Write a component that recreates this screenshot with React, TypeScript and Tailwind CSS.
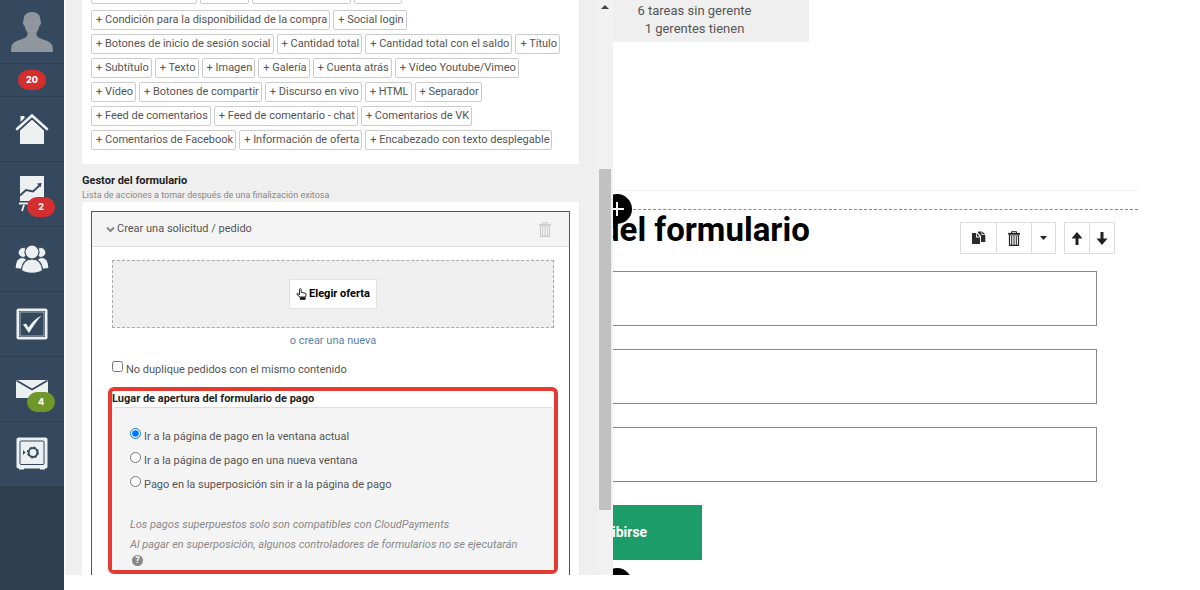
import React, { useState } from "react";

const fieldRows: string[][] = [
  ["+ Condición para la disponibilidad de la compra", "+ Social login"],
  [
    "+ Botones de inicio de sesión social",
    "+ Cantidad total",
    "+ Cantidad total con el saldo",
    "+ Título",
  ],
  [
    "+ Subtítulo",
    "+ Texto",
    "+ Imagen",
    "+ Galería",
    "+ Cuenta atrás",
    "+ Vídeo Youtube/Vimeo",
  ],
  [
    "+ Vídeo",
    "+ Botones de compartir",
    "+ Discurso en vivo",
    "+ HTML",
    "+ Separador",
  ],
  [
    "+ Feed de comentarios",
    "+ Feed de comentario - chat",
    "+ Comentarios de VK",
  ],
  [
    "+ Comentarios de Facebook",
    "+ Información de oferta",
    "+ Encabezado con texto desplegable",
  ],
];

const paymentOptions = [
  { value: "current", label: "Ir a la página de pago en la ventana actual" },
  { value: "new", label: "Ir a la página de pago en una nueva ventana" },
  {
    value: "overlay",
    label: "Pago en la superposición sin ir a la página de pago",
  },
];

function UserIcon() {
  return (
    <svg width="42" height="42" viewBox="0 0 42 42" fill="#8f969e">
      <path d="M21 1c-5.500 0-8.600 3.500-8.400 8.500-.9.600-.7 2.200-.3 3.500.3 1.200.8 2 1.500 2.200.4 2.800 1.600 4.800 2.700 6.200.4 2.700-.5 4.400-2.800 5.500C9 29 1 30 .3 36L0 41h42l-.3-5c-.7-6-8.700-7-13.400-9.100-2.300-1.100-3.200-2.800-2.800-5.500 1.100-1.400 2.300-3.400 2.700-6.200.7-.2 1.200-1 1.500-2.200.4-1.300.6-2.900-.3-3.500C29.600 4.500 26.500 1 21 1z" />
    </svg>
  );
}

function HomeIcon() {
  return (
    <svg width="34" height="32" viewBox="0 0 34 32">
      <path d="M5.500 3h4v5l-4 4z" fill="#ecf0f1" />
      <path d="M17 6 29 17.500V31H5V17.500z" fill="#ecf0f1" />
      <path
        d="M2 16 17 2.500 32 16"
        fill="none"
        stroke="#34495e"
        strokeWidth="6"
      />
      <path
        d="M2 16 17 2.500 32 16"
        fill="none"
        stroke="#ecf0f1"
        strokeWidth="2.600"
        strokeLinecap="round"
      />
    </svg>
  );
}

function ChartIcon() {
  return (
    <svg width="26" height="38" viewBox="0 0 26 38">
      <path d="M1 1h24v25H1z" fill="#ecf0f1" />
      <path d="M0 27.500h26v2H0z" fill="#ecf0f1" />
      <path
        d="M5 30 3 36M21 30l2 6"
        stroke="#ecf0f1"
        strokeWidth="1.800"
        fill="none"
      />
      <path
        d="M1 20.500 7 15l7 1.500 7-6.500"
        stroke="#34495e"
        strokeWidth="1.800"
        fill="none"
      />
      <path d="M18 8.500 22.500 8l-.8 4.500z" fill="#34495e" />
    </svg>
  );
}

function UsersIcon() {
  return (
    <svg
      width="34"
      height="30"
      viewBox="0 0 34 30"
      fill="#ecf0f1"
      stroke="#34495e"
      strokeWidth="1.200"
    >
      <circle cx="8" cy="8.500" r="5" />
      <circle cx="26" cy="8.500" r="5" />
      <path d="M0 24.500C.3 17 2.500 13.500 7 13.500s6 3 6 9l-4 3z" />
      <path d="M34 24.500c-.3-7.500-2.500-11-7-11s-6 3-6 9l4 3z" />
      <path d="M6.500 26.500C7 19 10 15 17 15s10 4 10.500 11.500c-5 3.800-16 3.800-21 0z" />
      <circle cx="17" cy="8" r="7" />
    </svg>
  );
}

function CheckIcon() {
  return (
    <svg width="32" height="32" viewBox="0 0 32 32">
      <rect x=".5" y=".5" width="31" height="31" rx="2" fill="#ecf0f1" />
      <rect x="3" y="3" width="26" height="26" fill="#34495e" />
      <rect
        x="4"
        y="4"
        width="24"
        height="24"
        fill="none"
        stroke="#ecf0f1"
        strokeWidth=".6"
      />
      <path
        d="M7 16.500 10 15.500 12.500 19.500C16 14 20 10 25.500 7.500 20.500 13 17 18.500 13 25z"
        fill="#ecf0f1"
      />
    </svg>
  );
}

function MailIcon() {
  return (
    <svg width="32" height="20" viewBox="0 0 32 20">
      <path d="M0 1h32v18H0z" fill="#ecf0f1" />
      <path
        d="M.5 1.500 16 10.500 31.500 1.500"
        fill="none"
        stroke="#34495e"
        strokeWidth="1.800"
      />
    </svg>
  );
}

function SafeIcon() {
  return (
    <svg width="32" height="34" viewBox="0 0 32 34">
      <rect x=".5" y=".5" width="31" height="31" rx="2" fill="#ecf0f1" />
      <path d="M3 31h5v1.500H3zM24 31h5v1.500h-5z" fill="#ecf0f1" />
      <rect
        x="4"
        y="4"
        width="24"
        height="23.500"
        rx="1"
        fill="none"
        stroke="#34495e"
      />
      <circle
        cx="17"
        cy="15.500"
        r="4.400"
        fill="none"
        stroke="#34495e"
        strokeWidth="2"
      />
      <circle
        cx="17"
        cy="15.500"
        r="5.600"
        fill="none"
        stroke="#34495e"
        strokeDasharray="2.200 2.200"
      />
      <path d="M7 13 9.500 15.500 7 18z" fill="#34495e" />
    </svg>
  );
}

function TrashIcon({ className }: { className?: string }) {
  return (
    <svg
      width="12"
      height="15"
      viewBox="0 0 12 15"
      fill="none"
      stroke="currentColor"
      className={className}
    >
      <path d="M3.500 2V.7h5V2" />
      <path d="M0 2.700h12" strokeWidth="1.600" />
      <path d="M1.500 4v10.300h9V4z" strokeWidth="1.200" />
      <path d="M3.700 5v9M6 5v9M8.300 5v9" />
    </svg>
  );
}

function CopyIcon() {
  return (
    <svg width="14" height="14" viewBox="0 0 14 14" fill="#2b2b2b">
      <path d="M0 2h4v4.500h4V13H0z" />
      <path d="M4.800 2 7.800 5.500h-3z" />
      <path d="M6 .5h3.500V4h3.800v7H9V5L6 1.800z" />
      <path d="M10.300.5 13.300 3.300h-3z" />
    </svg>
  );
}

function ArrowIcon({ down }: { down?: boolean }) {
  return (
    <svg
      width="12"
      height="13"
      viewBox="0 0 12 13"
      fill="#222"
      className={down ? "rotate-180" : undefined}
    >
      <path d="M6 0 11.500 6.500H7.500V13h-3V6.500H.5z" />
    </svg>
  );
}

function HandIcon() {
  return (
    <svg
      width="11"
      height="12"
      viewBox="0 0 11 12"
      fill="none"
      stroke="#111"
      strokeWidth=".9"
      strokeLinejoin="round"
    >
      <path d="M3.500 7V1.400c0-1.100 1.700-1.100 1.700 0v2.900l4 .9c.8.200 1.100.7 1 1.400L9.500 9H4L1 6.600c-.7-.9.5-1.700 1.200-1.100z" />
      <path d="M4.200 9.700h5v1.600h-5z" fill="#111" />
    </svg>
  );
}

const navItems = [
  { label: "Inicio", icon: <HomeIcon /> },
  { label: "Tráfico", icon: <ChartIcon />, badge: "2", color: "bg-[#d32f2f]" },
  { label: "Usuarios", icon: <UsersIcon /> },
  { label: "Tareas", icon: <CheckIcon /> },
  { label: "Mensajes", icon: <MailIcon />, badge: "4", color: "bg-[#71972b]" },
  { label: "Ventas", icon: <SafeIcon /> },
];

function Sidebar() {
  return (
    <nav className="w-16 shrink-0 bg-[#2c3e50] font-[Inter,sans-serif] font-extrabold text-white">
      <a
        href="#perfil"
        aria-label="Perfil"
        className="flex h-16 items-center justify-center border-b border-[#2c3e50] bg-[#34495e]"
      >
        <UserIcon />
      </a>
      <a
        href="#avisos"
        className="flex h-[33px] items-center justify-center border-b border-[#2c3e50] bg-[#34495e]"
      >
        <span className="flex h-5 w-7 items-center justify-center rounded-full bg-[#d32f2f] text-[9px]">
          20
        </span>
      </a>
      {navItems.map((item) => (
        <a
          key={item.label}
          href="#menu"
          aria-label={item.label}
          className="relative flex h-[65px] items-center justify-center border-b border-[#2c3e50] bg-[#34495e]"
        >
          {item.icon}
          {item.badge && (
            <span
              className={`absolute right-[9px] bottom-[9px] flex h-5 w-7 items-center justify-center rounded-full text-[9px] ${item.color}`}
            >
              {item.badge}
            </span>
          )}
        </a>
      ))}
    </nav>
  );
}

function FieldButtons() {
  return (
    <div className="-mt-3 flex flex-col gap-1 bg-white pb-3.5 pl-[9px]">
      <div className="mb-0.5 flex gap-[3px]" aria-hidden="true">
        <span className="h-4 w-[106px] rounded-xs border border-[#ccc]" />
        <span className="h-4 w-[49px] rounded-xs border border-[#ccc]" />
        <span className="h-4 w-[99px] rounded-xs border border-[#ccc]" />
        <span className="h-4 w-12 rounded-xs border border-[#ccc]" />
      </div>
      {fieldRows.map((row) => (
        <div key={row[0]} className="flex gap-[3px]">
          {row.map((label) => (
            <button
              key={label}
              type="button"
              className="h-5 rounded-xs border border-[#ccc] bg-white pr-0.5 pl-1 text-[11px] leading-4 whitespace-nowrap text-[#555]"
            >
              {label}
            </button>
          ))}
        </div>
      ))}
    </div>
  );
}

function PaymentPlace() {
  const [place, setPlace] = useState("current");

  return (
    <section className="-mx-1 mt-2.5 rounded-md border-4 border-[#e53a30]">
      <h3 className="text-[11px] leading-4 font-bold text-[#222]">
        Lugar de apertura del formulario de pago
      </h3>
      <div className="rounded-t-sm border-t border-[#ddd] bg-[#f4f4f4] px-[18px] pt-[17px] pb-1">
        {paymentOptions.map((option) => (
          <label
            key={option.value}
            className="flex h-6 items-start gap-[3px] text-[11px] leading-6 text-[#555]"
          >
            <input
              type="radio"
              name="place"
              value={option.value}
              checked={place === option.value}
              onChange={() => setPlace(option.value)}
              className="mt-[3px] size-[11px] shrink-0"
            />
            {option.label}
          </label>
        ))}
        <p className="mt-[18px] text-[11px] leading-5 text-[#888] italic">
          Los pagos superpuestos solo son compatibles con CloudPayments
        </p>
        <p className="text-[11px] leading-5 text-[#888] italic">
          Al pagar en superposición, algunos controladores de formularios no se
          ejecutarán
        </p>
        <button
          type="button"
          aria-label="Ayuda"
          className="ml-0.5 flex size-[11px] items-center justify-center rounded-full bg-[#888] text-[9px] leading-none font-bold text-white"
        >
          ?
        </button>
      </div>
    </section>
  );
}

function FormHandler() {
  const [unique, setUnique] = useState(false);

  return (
    <section className="bg-white px-[9px] pt-[9px]">
      <div className="border border-b-0 border-[#555]">
        <header className="flex h-[35px] items-center justify-between border-b border-[#ddd] bg-[#f4f4f4] pr-[18px] pl-3.5">
          <h2 className="flex items-center gap-0.5 text-[11px] text-[#555]">
            <svg width="9" height="7" viewBox="0 0 9 7" fill="none">
              <path d="m1 1.500 3.500 3.500L8 1.500" stroke="#888" strokeWidth="2" />
            </svg>
            Crear una solicitud / pedido
          </h2>
          <button type="button" aria-label="Eliminar">
            <TrashIcon className="text-[#ccc]" />
          </button>
        </header>
        <div className="pt-[13px] pr-[15px] pb-2 pl-5">
          <div className="flex h-[68px] items-center justify-center border border-dashed border-[#aaa] bg-[#efefef]">
            <button
              type="button"
              className="flex h-[30px] items-center gap-0.5 border border-[#e2e2e2] bg-white px-1.5 text-[11px] font-bold text-black"
            >
              <HandIcon />
              Elegir oferta
            </button>
          </div>
          <div className="mt-[5px] text-center text-[11px] leading-4">
            <a href="#nueva" className="text-[#5b82b0]">
              o crear una nueva
            </a>
          </div>
          <label className="mt-3 flex h-4 items-start gap-[3px] text-[11px] leading-[18px] text-[#555]">
            <input
              type="checkbox"
              checked={unique}
              onChange={(e) => setUnique(e.target.checked)}
              className="size-[11px] shrink-0"
            />
            No duplique pedidos con el mismo contenido
          </label>
          <PaymentPlace />
        </div>
      </div>
    </section>
  );
}

function EditorPanel() {
  return (
    <div className="flex min-w-0 overflow-hidden border-l-2 border-[#fafafa] bg-[#efefef]">
      <div className="min-w-0 flex-1 pr-[19px] pl-4">
        <FieldButtons />
        <h2 className="mt-2.5 text-[11px] leading-[14px] font-bold text-[#222]">
          Gestor del formulario
        </h2>
        <p className="text-[9px] leading-[14px] text-[#888]">
          Lista de acciones a tomar después de una finalización exitosa
        </p>
        <FormHandler />
      </div>
      <div className="flex w-[15px] shrink-0 flex-col bg-[#f1f1f1] px-px">
        <svg
          width="8"
          height="4"
          viewBox="0 0 8 4"
          className="mt-[5px] ml-0.5"
        >
          <path d="M4 0 8 4H0z" fill="#444" />
        </svg>
        <div className="mt-40 h-[341px] w-3 bg-[#c1c1c1]" />
      </div>
    </div>
  );
}

function AddBlockButton({ className }: { className: string }) {
  return (
    <button
      type="button"
      aria-label="Añadir bloque"
      className={`absolute -left-[11px] flex size-[30px] items-center justify-center rounded-full bg-black ${className}`}
    >
      <svg width="14" height="14" viewBox="0 0 14 14">
        <path d="M7 0v14M0 7h14" stroke="#fff" strokeWidth="2" />
      </svg>
    </button>
  );
}

function BlockToolbar() {
  return (
    <div className="mt-3 flex gap-2">
      <div className="flex h-8 divide-x divide-[#ddd] border border-[#ddd]">
        <button
          type="button"
          aria-label="Copiar"
          className="flex w-9 items-center justify-center"
        >
          <CopyIcon />
        </button>
        <button
          type="button"
          aria-label="Eliminar"
          className="flex w-[35px] items-center justify-center"
        >
          <TrashIcon className="text-[#222]" />
        </button>
        <button
          type="button"
          aria-label="Más"
          className="flex w-[23px] items-center justify-center"
        >
          <svg width="7" height="4" viewBox="0 0 7 4">
            <path d="M0 0h7L3.500 4z" fill="#222" />
          </svg>
        </button>
      </div>
      <div className="flex h-8 divide-x divide-[#ddd] border border-[#ddd]">
        <button
          type="button"
          aria-label="Subir"
          className="flex w-[25px] items-center justify-center"
        >
          <ArrowIcon />
        </button>
        <button
          type="button"
          aria-label="Bajar"
          className="flex w-6 items-center justify-center"
        >
          <ArrowIcon down />
        </button>
      </div>
    </div>
  );
}

function Preview() {
  return (
    <main className="min-w-0 overflow-hidden bg-white">
      <div className="-ml-[33px] h-[42px] w-[229px] bg-[#efefef] pt-0.5 text-center text-[13px] leading-[18px] text-[#555]">
        <p>6 tareas sin gerente</p>
        <p>1 gerentes tienen</p>
      </div>
      <div className="mt-[148px] mr-[62px] border-t border-[#eee] pt-[18px]">
        <div className="relative border-t border-dashed border-[#888]">
          <AddBlockButton className="-top-4" />
          <div className="-ml-3 flex items-start justify-between pr-[23px]">
            <h1 className="text-[33px] leading-10 font-bold text-black">
              del formulario
            </h1>
            <BlockToolbar />
          </div>
        </div>
      </div>
      <form className="mt-[17px] mr-[103px] -ml-2 flex flex-col items-start gap-[23px]">
        <input
          type="text"
          aria-label="Nombre"
          className="h-[55px] w-full border border-[#888] px-4"
        />
        <input
          type="email"
          aria-label="Correo"
          className="h-[55px] w-full border border-[#888] px-4"
        />
        <input
          type="tel"
          aria-label="Teléfono"
          className="h-[55px] w-full border border-[#888] px-4"
        />
        <button
          type="button"
          className="h-[55px] bg-[#1b9c68] pr-[55px] pl-[7px] text-[14px] font-bold text-white"
        >
          ibirse
        </button>
      </form>
      <div className="relative">
        <AddBlockButton className="top-2" />
      </div>
    </main>
  );
}

export default function App() {
  return (
    <div className="flex h-screen overflow-hidden bg-white font-[Roboto,sans-serif]">
      <Sidebar />
      <div className="grid min-w-0 flex-1 grid-cols-[minmax(0,549fr)_minmax(0,587fr)] grid-rows-[minmax(0,1fr)] pb-[15px]">
        <EditorPanel />
        <Preview />
      </div>
    </div>
  );
}
